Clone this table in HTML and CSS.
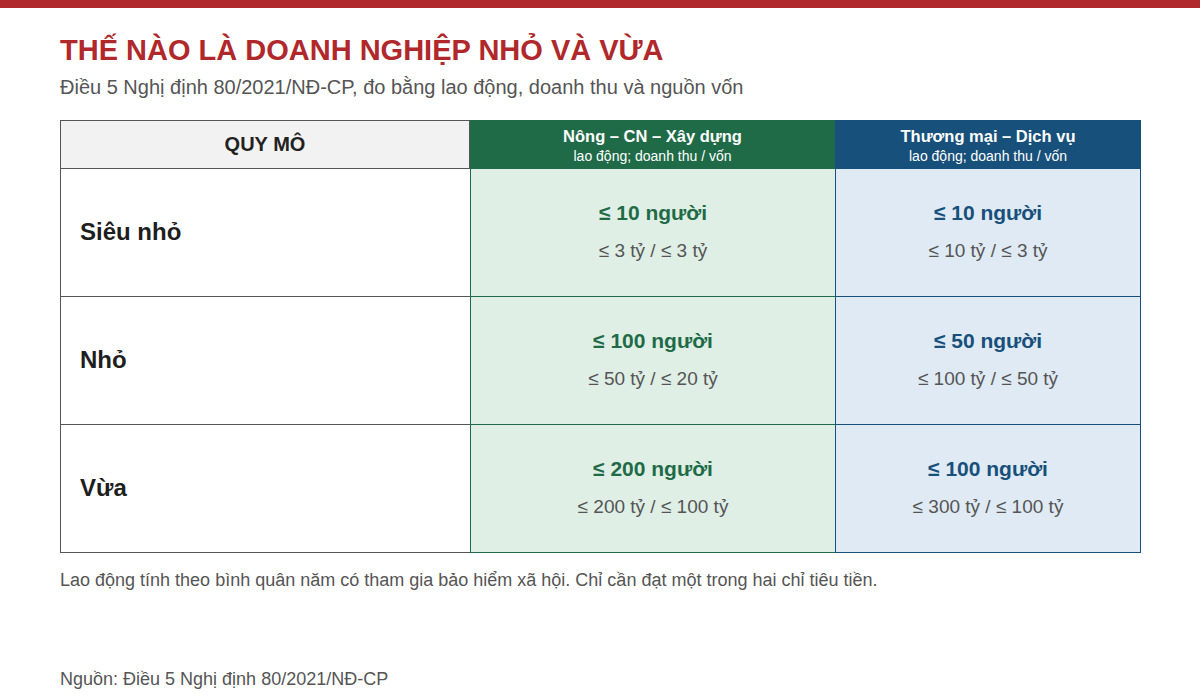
FILE: index.html
```html
<!DOCTYPE html>
<html lang="vi">
<head>
<meta charset="utf-8">
<title>Thế nào là doanh nghiệp nhỏ và vừa</title>
<link rel="stylesheet" href="styles.css">
</head>
<body>
<div class="topbar"></div>
<main class="page">
  <h1 class="title">THẾ NÀO LÀ DOANH NGHIỆP NHỎ VÀ VỪA</h1>
  <p class="subtitle">Điều 5 Nghị định 80/2021/NĐ-CP, đo bằng lao động, doanh thu và nguồn vốn</p>

  <div class="table">
    <div class="cell head head-scale">QUY MÔ</div>
    <div class="cell head head-green">
      <span class="head-main">Nông – CN – Xây dựng</span>
      <span class="head-sub">lao động; doanh thu / vốn</span>
    </div>
    <div class="cell head head-blue">
      <span class="head-main">Thương mại – Dịch vụ</span>
      <span class="head-sub">lao động; doanh thu / vốn</span>
    </div>

    <div class="cell label">Siêu nhỏ</div>
    <div class="cell val green"><span class="main">≤ 10 người</span><span class="sub">≤ 3 tỷ / ≤ 3 tỷ</span></div>
    <div class="cell val blue"><span class="main">≤ 10 người</span><span class="sub">≤ 10 tỷ / ≤ 3 tỷ</span></div>

    <div class="cell label">Nhỏ</div>
    <div class="cell val green"><span class="main">≤ 100 người</span><span class="sub">≤ 50 tỷ / ≤ 20 tỷ</span></div>
    <div class="cell val blue"><span class="main">≤ 50 người</span><span class="sub">≤ 100 tỷ / ≤ 50 tỷ</span></div>

    <div class="cell label">Vừa</div>
    <div class="cell val green"><span class="main">≤ 200 người</span><span class="sub">≤ 200 tỷ / ≤ 100 tỷ</span></div>
    <div class="cell val blue"><span class="main">≤ 100 người</span><span class="sub">≤ 300 tỷ / ≤ 100 tỷ</span></div>
  </div>

  <p class="note">Lao động tính theo bình quân năm có tham gia bảo hiểm xã hội. Chỉ cần đạt một trong hai chỉ tiêu tiền.</p>
  <p class="source">Nguồn: Điều 5 Nghị định 80/2021/NĐ-CP</p>
</main>
</body>
</html>
```

FILE: styles.css
```css
* { box-sizing: border-box; }

html, body {
  margin: 0;
  padding: 0;
  background: #ffffff;
  font-family: "Liberation Sans", Arial, sans-serif;
}

.topbar {
  height: 8px;
  background: #b0282b;
}

.page {
  padding: 0 60px;
  display: flex;
  flex-direction: column;
}

.title {
  margin: 25px 0 0;
  font-size: 29px;
  line-height: 34px;
  font-weight: 700;
  color: #b0282b;
}

.subtitle {
  margin: 8px 0 0;
  font-size: 20px;
  line-height: 24px;
  color: #555555;
}

.table {
  margin-top: 21px;
  display: grid;
  grid-template-columns: 410px 365px 306px;
  grid-template-rows: 49px 128px 128px 128px;
}

.cell {
  display: flex;
  flex-direction: column;
  align-items: center;
  justify-content: center;
}

.head-scale {
  background: #f2f2f2;
  border: 1px solid #555555;
  font-size: 20px;
  font-weight: 700;
  color: #222222;
}

.head-green {
  background: #1f6b48;
  color: #ffffff;
}

.head-blue {
  background: #17507a;
  color: #ffffff;
}

.head-main {
  font-size: 16.5px;
  line-height: 19px;
  font-weight: 700;
  padding-top: 2px;
}

.head-sub {
  font-size: 14px;
  line-height: 17px;
  margin-top: 2px;
}

.label {
  align-items: flex-start;
  padding-left: 19px;
  padding-bottom: 2px;
  border-left: 1px solid #555555;
  border-bottom: 1px solid #555555;
  font-size: 24px;
  font-weight: 700;
  color: #1e1e1e;
}

.val {
  gap: 15px;
  padding-bottom: 2px;
}

.green {
  background: #dfefe6;
  border-left: 1px solid #1f6b48;
  border-bottom: 1px solid #1f6b48;
}

.blue {
  background: #dfeaf4;
  border-left: 1px solid #17507a;
  border-right: 1px solid #17507a;
  border-bottom: 1px solid #17507a;
}

.main {
  font-size: 21px;
  line-height: 24px;
  font-weight: 700;
}

.green .main { color: #1f6b48; }
.blue .main { color: #17507a; }

.sub {
  font-size: 19px;
  line-height: 22px;
  color: #555555;
}

.note {
  margin: 16px 0 0;
  font-size: 18px;
  line-height: 22px;
  color: #555555;
}

.source {
  margin: 77px 0 0;
  font-size: 18px;
  line-height: 22px;
  color: #555555;
}
```
